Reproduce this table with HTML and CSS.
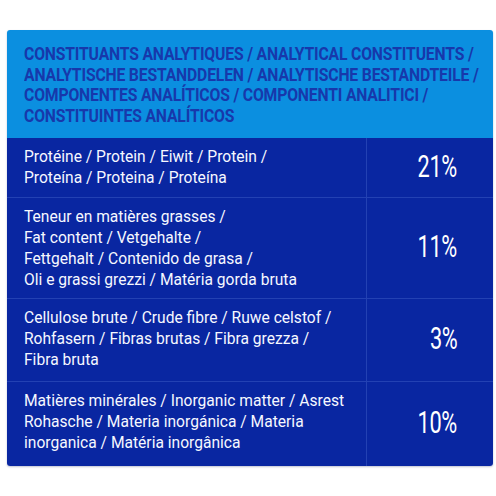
FILE: index.html
```
<!DOCTYPE html>
<html>
<head>
<meta charset="utf-8">
<link rel="stylesheet" href="styles.css">
</head>
<body>
<div class="card">
  <div class="head">
    <div class="htext">
      <div class="hline">CONSTITUANTS ANALYTIQUES / ANALYTICAL CONSTITUENTS /</div>
      <div class="hline">ANALYTISCHE BESTANDDELEN / ANALYTISCHE BESTANDTEILE /</div>
      <div class="hline">COMPONENTES ANALÍTICOS / COMPONENTI ANALITICI /</div>
      <div class="hline">CONSTITUINTES ANALÍTICOS</div>
    </div>
  </div>
  <div class="rows">
    <div class="row r1">
      <div class="label">Protéine / Protein / Eiwit / Protein /<br>Proteína / Proteina / Proteína</div>
      <div class="val"><span>21%</span></div>
    </div>
    <div class="row r2">
      <div class="label">Teneur en matières grasses /<br>Fat content / Vetgehalte /<br>Fettgehalt / Contenido de grasa /<br>Oli e grassi grezzi / Matéria gorda bruta</div>
      <div class="val"><span>11%</span></div>
    </div>
    <div class="row r3">
      <div class="label">Cellulose brute / Crude fibre / Ruwe celstof /<br>Rohfasern / Fibras brutas / Fibra grezza /<br>Fibra bruta</div>
      <div class="val"><span>3%</span></div>
    </div>
    <div class="row r4">
      <div class="label">Matières minérales / Inorganic matter / Asrest<br>Rohasche / Materia inorgánica / Materia<br>inorganica / Matéria inorgânica</div>
      <div class="val"><span>10%</span></div>
    </div>
  </div>
</div>
</body>
</html>
```
FILE: styles.css
```
html, body {
  margin: 0;
  padding: 0;
  background: #ffffff;
}
body {
  width: 496px;
  height: 496px;
  padding: 30px 3px 0 7px;
  box-sizing: border-box;
  font-family: Roboto, "Liberation Sans", sans-serif;
}
.card {
  width: 486px;
  height: 436px;
  border-radius: 3px;
  overflow: hidden;
  display: flex;
  flex-direction: column;
  box-shadow: 0 1px 2px rgba(0, 20, 80, 0.25);
}
.head {
  background: #0b8fe0;
  height: 108px;
  box-sizing: border-box;
  padding: 14px 0 0 17px;
  color: #1738ab;
}
.htext {
  font-weight: 700;
  font-size: 17.5px;
  line-height: 20.7px;
  letter-spacing: -0.2px;
  transform: scaleX(0.9);
  transform-origin: left top;
}
.hline {
  white-space: nowrap;
}
.rows {
  flex: 1;
  background: #0926a1;
  display: flex;
  flex-direction: column;
}
.row {
  display: grid;
  grid-template-columns: 360px 1fr;
  border-bottom: 1px solid #2341b3;
}
.row:last-child {
  border-bottom: none;
  flex: 1;
}
.r1 { height: 59px; }
.r2 { height: 100px; }
.r3 { height: 82px; }
.label {
  color: #f6f8ff;
  font-size: 15.6px;
  line-height: 21px;
  padding: 9px 0 0 17px;
  white-space: nowrap;
  border-right: 1px solid #2341b3;
}
.val {
  display: flex;
  align-items: center;
  justify-content: flex-end;
  padding: 0 36px 4px 0;
  color: #ffffff;
}
.val span {
  font-size: 32px;
  font-weight: 400;
  display: inline-block;
  transform: scaleX(0.68);
  transform-origin: right center;
  letter-spacing: -0.5px;
}
```
